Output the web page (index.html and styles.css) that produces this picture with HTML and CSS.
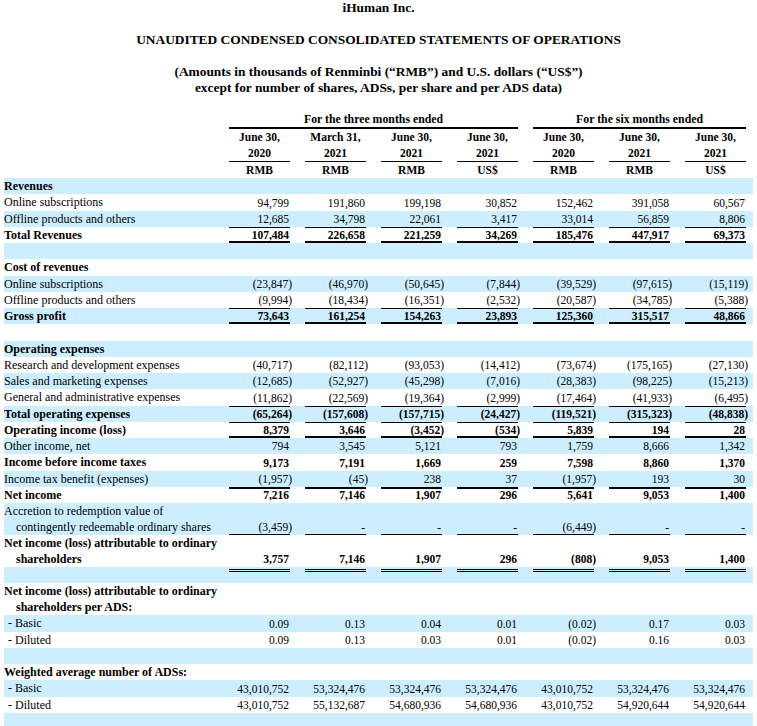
FILE: index.html
```html
<!DOCTYPE html>
<html lang="en">
<head>
<meta charset="utf-8">
<title>iHuman Inc. - Statements of Operations</title>
<link rel="stylesheet" href="styles.css">
</head>
<body>
<header class="head">
  <h1 class="t1">iHuman Inc.</h1>
  <h2 class="t2">UNAUDITED CONDENSED CONSOLIDATED STATEMENTS OF OPERATIONS</h2>
  <p class="t3">(Amounts in thousands of Renminbi (“RMB”) and U.S. dollars (“US$”)<br>except for number of shares, ADSs, per share and per ADS data)</p>
</header>
<table class="fin">
  <colgroup>
    <col class="c-lab"><col class="c-n"><col class="c-n"><col class="c-n"><col class="c-n"><col class="c-n"><col class="c-n"><col class="c-last">
  </colgroup>
  <thead>
    <tr class="grp"><th></th><th colspan="4">For the three months ended</th><th colspan="3">For the six months ended</th></tr>
    <tr class="dates"><th></th><th>June 30,<br>2020</th><th>March 31,<br>2021</th><th>June 30,<br>2021</th><th>June 30,<br>2021</th><th>June 30,<br>2020</th><th>June 30,<br>2021</th><th>June 30,<br>2021</th></tr>
    <tr class="cur"><th></th><th>RMB</th><th>RMB</th><th>RMB</th><th>US$</th><th>RMB</th><th>RMB</th><th>US$</th></tr>
  </thead>
  <tbody>
    <tr class="b"><td colspan="8">Revenues</td></tr>
    <tr><td>Online subscriptions</td><td>94,799</td><td>191,860</td><td>199,198</td><td>30,852</td><td>152,462</td><td>391,058</td><td>60,567</td></tr>
    <tr><td>Offline products and others</td><td>12,685</td><td>34,798</td><td>22,061</td><td>3,417</td><td>33,014</td><td>56,859</td><td>8,806</td></tr>
    <tr class="b tb"><td>Total Revenues</td><td>107,484</td><td>226,658</td><td>221,259</td><td>34,269</td><td>185,476</td><td>447,917</td><td>69,373</td></tr>
    <tr><td colspan="8"></td></tr>
    <tr class="b"><td colspan="8">Cost of revenues</td></tr>
    <tr><td>Online subscriptions</td><td><span class="ng">(23,847)</span></td><td><span class="ng">(46,970)</span></td><td><span class="ng">(50,645)</span></td><td><span class="ng">(7,844)</span></td><td><span class="ng">(39,529)</span></td><td><span class="ng">(97,615)</span></td><td><span class="ng">(15,119)</span></td></tr>
    <tr><td>Offline products and others</td><td><span class="ng">(9,994)</span></td><td><span class="ng">(18,434)</span></td><td><span class="ng">(16,351)</span></td><td><span class="ng">(2,532)</span></td><td><span class="ng">(20,587)</span></td><td><span class="ng">(34,785)</span></td><td><span class="ng">(5,388)</span></td></tr>
    <tr class="b tb"><td>Gross profit</td><td>73,643</td><td>161,254</td><td>154,263</td><td>23,893</td><td>125,360</td><td>315,517</td><td>48,866</td></tr>
    <tr><td colspan="8"></td></tr>
    <tr class="b"><td colspan="8">Operating expenses</td></tr>
    <tr><td>Research and development expenses</td><td><span class="ng">(40,717)</span></td><td><span class="ng">(82,112)</span></td><td><span class="ng">(93,053)</span></td><td><span class="ng">(14,412)</span></td><td><span class="ng">(73,674)</span></td><td><span class="ng">(175,165)</span></td><td><span class="ng">(27,130)</span></td></tr>
    <tr><td>Sales and marketing expenses</td><td><span class="ng">(12,685)</span></td><td><span class="ng">(52,927)</span></td><td><span class="ng">(45,298)</span></td><td><span class="ng">(7,016)</span></td><td><span class="ng">(28,383)</span></td><td><span class="ng">(98,225)</span></td><td><span class="ng">(15,213)</span></td></tr>
    <tr><td>General and administrative expenses</td><td><span class="ng">(11,862)</span></td><td><span class="ng">(22,569)</span></td><td><span class="ng">(19,364)</span></td><td><span class="ng">(2,999)</span></td><td><span class="ng">(17,464)</span></td><td><span class="ng">(41,933)</span></td><td><span class="ng">(6,495)</span></td></tr>
    <tr class="b t"><td>Total operating expenses</td><td><span class="ng">(65,264)</span></td><td><span class="ng">(157,608)</span></td><td><span class="ng">(157,715)</span></td><td><span class="ng">(24,427)</span></td><td><span class="ng">(119,521)</span></td><td><span class="ng">(315,323)</span></td><td><span class="ng">(48,838)</span></td></tr>
    <tr class="b tb"><td>Operating income (loss)</td><td>8,379</td><td>3,646</td><td><span class="ng">(3,452)</span></td><td><span class="ng">(534)</span></td><td>5,839</td><td>194</td><td>28</td></tr>
    <tr><td>Other income, net</td><td>794</td><td>3,545</td><td>5,121</td><td>793</td><td>1,759</td><td>8,666</td><td>1,342</td></tr>
    <tr class="b"><td>Income before income taxes</td><td>9,173</td><td>7,191</td><td>1,669</td><td>259</td><td>7,598</td><td>8,860</td><td>1,370</td></tr>
    <tr><td>Income tax benefit (expenses)</td><td><span class="ng">(1,957)</span></td><td><span class="ng">(45)</span></td><td>238</td><td>37</td><td><span class="ng">(1,957)</span></td><td>193</td><td>30</td></tr>
    <tr class="b t2"><td>Net income</td><td>7,216</td><td>7,146</td><td>1,907</td><td>296</td><td>5,641</td><td>9,053</td><td>1,400</td></tr>
    <tr class="bb"><td class="hang">Accretion to redemption value of<br>contingently redeemable ordinary shares</td><td><span class="ng">(3,459)</span></td><td>-</td><td>-</td><td>-</td><td><span class="ng">(6,449)</span></td><td>-</td><td>-</td></tr>
    <tr class="b"><td class="hang">Net income (loss) attributable to ordinary<br>shareholders</td><td>3,757</td><td>7,146</td><td>1,907</td><td>296</td><td><span class="ng">(808)</span></td><td>9,053</td><td>1,400</td></tr>
    <tr class="dbl"><td></td><td></td><td></td><td></td><td></td><td></td><td></td><td></td></tr>
    <tr class="b"><td colspan="8" class="hang">Net income (loss) attributable to ordinary<br>shareholders per ADS:</td></tr>
    <tr><td class="sub">- Basic</td><td>0.09</td><td>0.13</td><td>0.04</td><td>0.01</td><td><span class="ng">(0.02)</span></td><td>0.17</td><td>0.03</td></tr>
    <tr><td class="sub">- Diluted</td><td>0.09</td><td>0.13</td><td>0.03</td><td>0.01</td><td><span class="ng">(0.02)</span></td><td>0.16</td><td>0.03</td></tr>
    <tr><td colspan="8"></td></tr>
    <tr class="b"><td colspan="8">Weighted average number of ADSs:</td></tr>
    <tr><td class="sub">- Basic</td><td>43,010,752</td><td>53,324,476</td><td>53,324,476</td><td>53,324,476</td><td>43,010,752</td><td>53,324,476</td><td>53,324,476</td></tr>
    <tr><td class="sub">- Diluted</td><td>43,010,752</td><td>55,132,687</td><td>54,680,936</td><td>54,680,936</td><td>43,010,752</td><td>54,920,644</td><td>54,920,644</td></tr>
    <tr><td colspan="8"></td></tr>
  </tbody>
</table>
</body>
</html>
```

FILE: styles.css
```css
* { box-sizing: border-box; }

body {
  margin: 0;
  background: #fff;
  color: #000;
  font-family: "Liberation Serif", "Times New Roman", serif;
}

.head {
  text-align: center;
  font-weight: bold;
  font-size: 13.4px;
  line-height: 16px;
}
.head .t1, .head .t2, .head .t3 {
  font-size: 13.4px;
  margin: 0 0 16px;
  font-weight: bold;
}
.head .t3 { margin-bottom: 14px; }

.fin {
  margin-left: 4px;
  width: 749px;
  table-layout: fixed;
  border-collapse: separate;
  border-spacing: 0;
  font-size: 11.5px;
  line-height: 16px;
}
.c-lab { width: 210px; }
.c-n { width: 76px; }
.c-last { width: 83px; }

.fin th, .fin td {
  padding: 0;
  white-space: nowrap;
}
.fin th + th, .fin td + td {
  border-left: 15px solid transparent;
  text-align: right;
  padding-right: 1px;
  vertical-align: bottom;
}
.fin tr > :last-child:not([colspan="8"]) {
  border-right: 7px solid transparent;
}
.ng { margin-right: -3px; }

/* header */
.fin thead th {
  font-weight: bold;
  text-align: center;
}
.fin thead th + th { text-align: center; padding-right: 0; }
.grp th { height: 19px; padding-bottom: 2px; vertical-align: bottom; font-size: 11.8px; }
.grp th + th { box-shadow: inset 0 -2px #000; }
.dates th { height: 33px; padding-bottom: 1px; }
.dates th + th { box-shadow: inset 0 -1px #000; }
.cur th { height: 16px; }

/* body */
.fin tbody tr { height: 16.25px; }
.fin tbody tr:nth-child(odd) { background: #cceeff; }
.fin tbody td { vertical-align: top; font-size: 12px; }
.fin tbody td + td { vertical-align: bottom; font-size: 11.5px; }
.fin tbody tr.b { font-weight: bold; }

.hang { padding-left: 12px !important; text-indent: -12px; }
.sub { padding-left: 4px !important; }

.tb td + td { box-shadow: inset 0 1px #000, inset 0 -2px #000; }
.t td + td { box-shadow: inset 0 1px #000; }
.t2 td + td { box-shadow: inset 0 2px #000; }
.bb td + td { box-shadow: inset 0 -1px #000; }
.dbl td + td {
  box-shadow: inset 0 2px #cceeff, inset 0 3px #000, inset 0 4px #cceeff, inset 0 5px #000;
}
```
